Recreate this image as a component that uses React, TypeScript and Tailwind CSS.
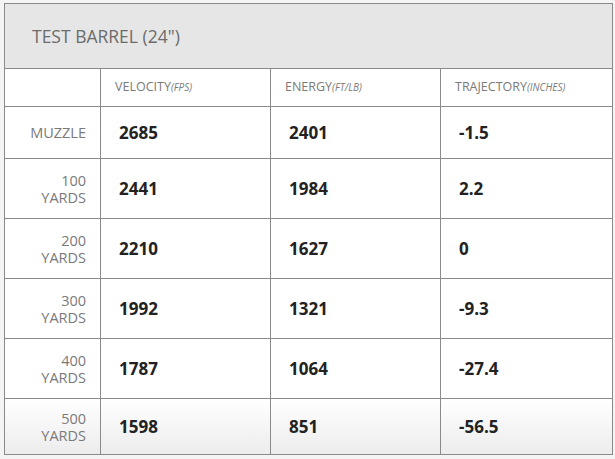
const rows = [
  { label: ["MUZZLE"], v: "2685", e: "2401", t: "-1.5", h: "h-[52px]" },
  { label: ["100", "YARDS"], v: "2441", e: "1984", t: "2.2", h: "h-[60px]" },
  { label: ["200", "YARDS"], v: "2210", e: "1627", t: "0", h: "h-[60px]" },
  { label: ["300", "YARDS"], v: "1992", e: "1321", t: "-9.3", h: "h-[60px]" },
  { label: ["400", "YARDS"], v: "1787", e: "1064", t: "-27.4", h: "h-[60px]" },
  { label: ["500", "YARDS"], v: "1598", e: "851", t: "-56.5", h: "h-[56px]" },
]

const cols = [
  { name: "VELOCITY", unit: "(FPS)" },
  { name: "ENERGY", unit: "(FT/LB)" },
  { name: "TRAJECTORY", unit: "(INCHES)" },
]

export default function App() {
  return (
    <div className="min-h-[459px] w-[615px] bg-[#f4f4f4] pt-[3px] pl-[4px] font-['Open_Sans',sans-serif]">
      <table className="w-[608px] border-collapse border border-[#8a8a8a] table-fixed">
        <colgroup>
          <col className="w-[96px]" />
          <col className="w-[170px]" />
          <col className="w-[170px]" />
          <col className="w-[172px]" />
        </colgroup>
        <thead>
          <tr className="h-[65px] bg-[#e6e6e6]">
            <th colSpan={4} className="border-b border-[#8a8a8a] pl-[27px] text-left text-[17.5px] font-normal text-[#6b6b6b]">
              TEST BARREL (24")
            </th>
          </tr>
          <tr className="h-[38px] bg-white">
            <th className="border-r border-b border-[#8a8a8a]" />
            {cols.map((c) => (
              <th key={c.name} className="border-r border-b border-[#8a8a8a] pl-[14px] text-left text-[12.5px] font-normal text-[#7a7a7a]">
                {c.name}
                <span className="text-[10px] italic">{c.unit}</span>
              </th>
            ))}
          </tr>
        </thead>
        <tbody>
          {rows.map((r, i) => (
            <tr
              key={i}
              className={`${r.h} ${i === rows.length - 1 ? "bg-gradient-to-b from-white to-[#ececec]" : "bg-white"}`}
            >
              <td className="border-r border-b border-[#8a8a8a] pr-[14px] text-right text-[14.5px] leading-[17px] text-[#7a7a7a]">
                {r.label.map((l) => (
                  <div key={l}>{l}</div>
                ))}
              </td>
              <td className="border-r border-b border-[#8a8a8a] pl-[18px] text-[17px] font-bold text-[#222]">{r.v}</td>
              <td className="border-r border-b border-[#8a8a8a] pl-[18px] text-[17px] font-bold text-[#222]">{r.e}</td>
              <td className="border-b border-[#8a8a8a] pl-[18px] text-[17px] font-bold text-[#222]">{r.t}</td>
            </tr>
          ))}
        </tbody>
      </table>
    </div>
  )
}
